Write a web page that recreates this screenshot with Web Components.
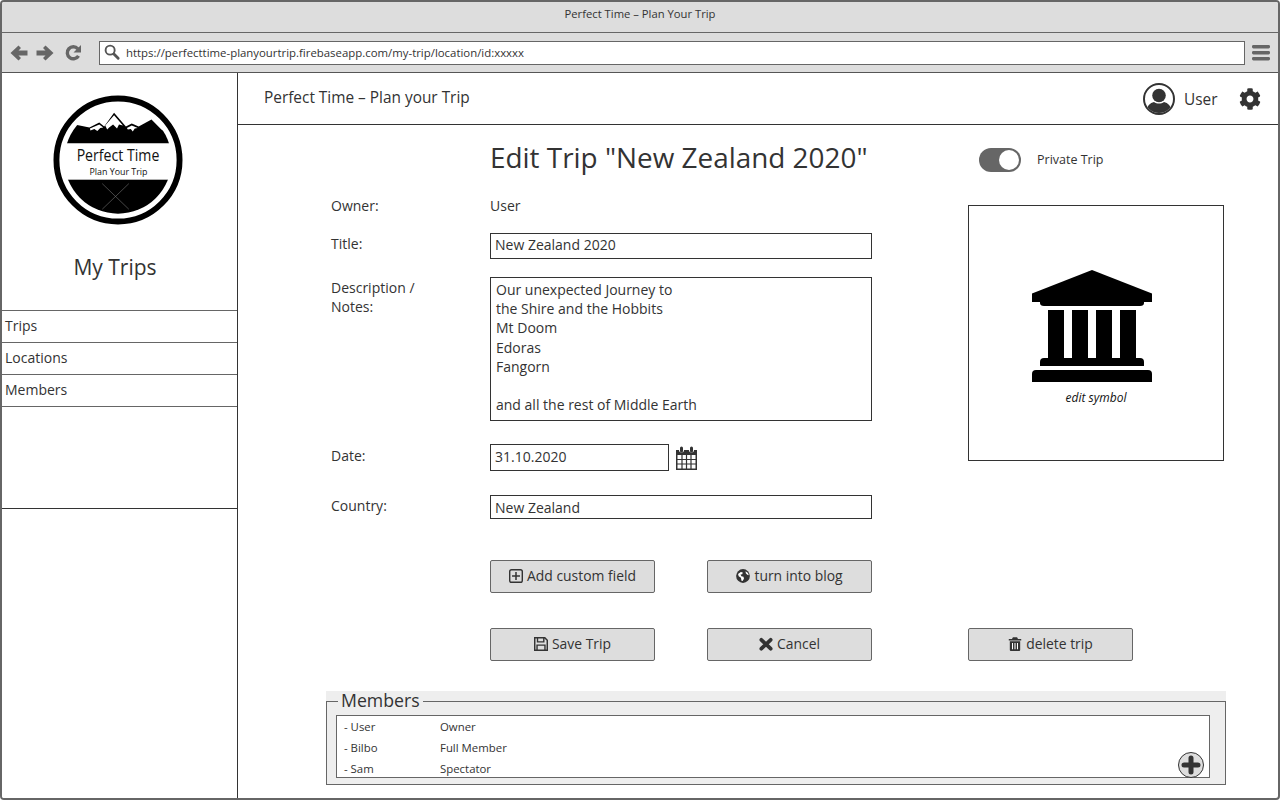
<!DOCTYPE html>
<html>
<head>
<meta charset="utf-8">
<title>Perfect Time</title>
<style>
  html, body { margin: 0; padding: 0; background: #fff; }
  body { font-family: "Open Sans", sans-serif; color: #333; }
</style>
</head>
<body>
<browser-window>
  <side-nav></side-nav>
  <top-bar></top-bar>
  <trip-form></trip-form>
</browser-window>

<script>
const ICONS = {
  back: '<path fill="#666" d="M.5 9 8.500 1.500 11 4 8.500 6.500H17.500V11.500H8.500L11 14 8.500 16.500z"/>',
  forward: '<path fill="#666" d="M17.500 9 9.500 1.500 7 4 9.500 6.500H.5V11.500H9.500L7 14 9.500 16.500z"/>',
  reload: '<path fill="none" stroke="#666" stroke-width="3.400" d="M13.500 11.800A6 6 0 1 1 12.800 4.800"/><path fill="#666" d="M16 1v7.500H8.500z"/>',
  search: '<circle cx="6.5" cy="6.5" r="4.8" fill="none" stroke="#555" stroke-width="2"/><path stroke="#555" stroke-width="3" stroke-linecap="round" d="M10.5 10.5 15 15"/>',
  bars: '<rect x="0" y="1" width="18" height="3.4" rx="1.4" fill="#666"/><rect x="0" y="7" width="18" height="3.4" rx="1.4" fill="#666"/><rect x="0" y="13" width="18" height="3.4" rx="1.4" fill="#666"/>',
  user: '<defs><clipPath id="c"><circle cx="16" cy="16" r="14"/></clipPath></defs><circle cx="16" cy="16" r="15" fill="#fff" stroke="#333" stroke-width="2"/><g clip-path="url(#c)" fill="#333"><circle cx="16" cy="12.5" r="6.8"/><path d="M3 32c0-9 4-12 8-13 3 2 7 2 10 0 4 1 8 4 8 13z"/></g>',
  gear: '<path fill="#333" transform="scale(.03125)" d="M487.4 315.7l-42.6-24.6c4.3-23.2 4.3-47 0-70.2l42.6-24.6c4.9-2.8 7.1-8.6 5.5-14-11.1-35.6-30-67.8-54.7-94.6-3.8-4.1-10-5.1-14.8-2.3L380.8 110c-17.9-15.4-38.5-27.3-60.8-35.1V25.8c0-5.6-3.9-10.5-9.4-11.7-36.7-8.2-74.3-7.8-109.2 0-5.5 1.2-9.4 6.1-9.4 11.7V75c-22.2 7.9-42.8 19.8-60.8 35.1L88.7 85.5c-4.9-2.8-11-1.9-14.8 2.3-24.7 26.7-43.6 58.9-54.7 94.6-1.7 5.4.6 11.2 5.5 14L67.3 221c-4.3 23.2-4.3 47 0 70.2l-42.6 24.6c-4.9 2.8-7.1 8.6-5.5 14 11.1 35.6 30 67.8 54.7 94.6 3.8 4.1 10 5.1 14.8 2.3l42.6-24.6c17.9 15.4 38.5 27.3 60.8 35.1v49.2c0 5.6 3.9 10.5 9.4 11.7 36.7 8.2 74.3 7.8 109.2 0 5.5-1.2 9.4-6.1 9.4-11.7v-49.2c22.2-7.9 42.8-19.8 60.8-35.1l42.6 24.6c4.9 2.8 11 1.9 14.8-2.3 24.7-26.7 43.6-58.9 54.7-94.6 1.5-5.5-.7-11.3-5.6-14.1zM256 336c-44.1 0-80-35.9-80-80s35.9-80 80-80 80 35.9 80 80-35.9 80-80 80z"/>',
  plusbox: '<rect x="1.6" y="1.6" width="10.8" height="10.8" rx="1.6" fill="none" stroke="#333" stroke-width="1.2"/><path stroke="#333" stroke-width="1.3" d="M7 3.6v6.8M3.6 7h6.8"/>',
  globe: '<circle cx="7" cy="7" r="6.4" fill="#333"/><path fill="#fff" d="M2.4 5.2 5 3.4l1.8.3-.5 1.6-1.6.4.8 1.6 2 .5.4 1.7-1.3 2.2-1-.4-.5-2.6L3 7.2zM9.4 2.6l2.2 1.6.8 2-1.4-.4-1.4-1.4z"/>',
  save: '<path fill="none" stroke="#333" stroke-width="1.3" d="M1.6 1.6h8.6l2.2 2.2v8.6H1.6z"/><path fill="none" stroke="#333" stroke-width="1.2" d="M4 1.8v3.4h5.4V1.8M3.6 12.2V8h6.8v4.2"/>',
  times: '<path stroke="#333" stroke-width="3.2" stroke-linecap="round" d="M3 3.4l8 7.6M11 3.4 3 11"/>',
  trash: '<path fill="#333" d="M5 .8h4l.9 1.7H13v1.4H1V2.5h3.1zM2 4.7h10V13a1 1 0 0 1-1 1H3a1 1 0 0 1-1-1z"/><path stroke="#fff" stroke-width="1" d="M4.6 6.2v6M7 6.2v6M9.4 6.2v6"/>'
};
const ICON_VIEW = {
  back: '0 0 18 18', forward: '0 0 18 18', reload: '0 0 18 18', search: '0 0 18 18', bars: '0 0 18 18',
  user: '0 0 32 32', gear: '0 0 16 16',
  plusbox: '1 1 12 12', globe: '0.5 0.5 13 13', save: '1 1 12 12', times: '1 1 12 12', trash: '0.5 0.5 13 13.500'
};

class UiIcon extends HTMLElement {
  connectedCallback() {
    const name = this.getAttribute('name');
    const size = this.getAttribute('size') || 14;
    this.attachShadow({ mode: 'open' });
    this.shadowRoot.innerHTML = `
      <style>
        :host { display: inline-flex; flex: none; }
        svg { display: block; }
      </style>
      <svg width="${size}" height="${size}" viewBox="${ICON_VIEW[name]}">${ICONS[name]}</svg>`;
  }
}

class BrowserWindow extends HTMLElement {
  connectedCallback() {
    this.attachShadow({ mode: 'open' });
    this.shadowRoot.innerHTML = `
      <style>
        :host {
          display: block;
          box-sizing: border-box;
          width: 1280px;
          height: 800px;
          border: 2px solid #666;
          border-radius: 4px;
          overflow: hidden;
          background: #fff;
        }
        .title {
          height: 23px;
          padding-bottom: 7px;
          background: #ddd;
          border-bottom: 1px solid #666;
          display: flex;
          align-items: center;
          justify-content: center;
          font-size: 11.25px;
          color: #333;
        }
        .tools {
          height: 39px;
          background: #ddd;
          border-bottom: 1px solid #555;
          display: flex;
          align-items: center;
          padding: 0 8px;
        }
        .nav { display: flex; align-items: center; gap: 8px; width: 89px; flex: none; }
        .url {
          flex: 1;
          height: 22px;
          background: #fff;
          border: 1px solid #666;
          display: flex;
          align-items: center;
          gap: 5px;
          padding-left: 4px;
          font-size: 11.4px;
          color: #333;
        }
        .bars { margin-left: 7px; }
        .body { display: grid; grid-template-columns: 235px 1fr; height: 725px; }
        .right { display: flex; flex-direction: column; border-left: 1px solid #333; min-width: 0; }
      </style>
      <div class="title">Perfect Time – Plan Your Trip</div>
      <div class="tools">
        <div class="nav">
          <ui-icon name="back" size="18"></ui-icon>
          <ui-icon name="forward" size="18"></ui-icon>
          <ui-icon name="reload" size="18" style="margin-left:3px"></ui-icon>
        </div>
        <div class="url"><ui-icon name="search" size="17"></ui-icon><span>https://perfecttime-planyourtrip.firebaseapp.com/my-trip/location/id:xxxxx</span></div>
        <ui-icon class="bars" name="bars" size="18"></ui-icon>
      </div>
      <div class="body">
        <slot name="side"></slot>
        <div class="right"><slot></slot></div>
      </div>`;
    const side = this.querySelector('side-nav');
    if (side) side.slot = 'side';
  }
}

class TripLogo extends HTMLElement {
  connectedCallback() {
    this.attachShadow({ mode: 'open' });
    this.shadowRoot.innerHTML = `
      <style>
        :host { display: block; width: 130px; height: 130px; }
        svg { display: block; }
        text { font-family: "Open Sans", sans-serif; fill: #111; }
      </style>
      <svg width="130" height="130" viewBox="0 0 132 132">
        <defs><clipPath id="inner"><circle cx="66" cy="66" r="54.5"/></clipPath></defs>
        <circle cx="66" cy="66" r="62.5" fill="#fff" stroke="#000" stroke-width="6"/>
        <g clip-path="url(#inner)">
          <path fill="#000" d="M0 49 22 30 37 33 47 28 52 32 62 18 74 32 80 29 87 32 100 25 110 35 132 49z"/>
          <path fill="#fff" d="M62 20.500 71 31 67 30 65 34 61 30 57 33 55 35 53 31z"/>
          <path fill="#fff" d="M47 30 51 33 48 33.500 45 36.500 42 34.500 38 36 37.500 34z"/>
          <path fill="#fff" d="M80 31 86 33.500 83 34 81 37 79 34.500 76 35 75 33.500z"/>
          <rect x="0" y="86" width="132" height="40" fill="#000"/>
          <path stroke="#777" stroke-width=".6" d="M50 90l27 26M77 90l-27 26"/>
        </g>
        <text x="24" y="67" font-size="17" textLength="84" lengthAdjust="spacingAndGlyphs">Perfect Time</text>
        <text x="37" y="81" font-size="10" textLength="59" lengthAdjust="spacingAndGlyphs">Plan Your Trip</text>
      </svg>`;
  }
}

class SideNav extends HTMLElement {
  connectedCallback() {
    this.attachShadow({ mode: 'open' });
    this.shadowRoot.innerHTML = `
      <style>
        :host { display: flex; flex-direction: column; height: 100%; background: #fff; }
        trip-logo { margin: 22px 0 0 51px; }
        h2 {
          margin: 25px 0 0;
          font-weight: 400;
          font-size: 21px;
          line-height: 34px;
          height: 60px;
          text-align: center;
          padding-right: 9px;
          color: #333;
        }
        a {
          display: block;
          height: 31px;
          line-height: 29px;
          border-top: 1px solid #666;
          padding-left: 3px;
          font-size: 14px;
          color: #333;
        }
        .spacer { height: 101px; border-top: 1px solid #666; }
        .end { border-top: 1px solid #333; }
      </style>
      <trip-logo></trip-logo>
      <h2>My Trips</h2>
      <a>Trips</a>
      <a>Locations</a>
      <a>Members</a>
      <div class="spacer"></div>
      <div class="end"></div>`;
  }
}

class TopBar extends HTMLElement {
  connectedCallback() {
    this.attachShadow({ mode: 'open' });
    this.shadowRoot.innerHTML = `
      <style>
        :host {
          display: flex;
          align-items: center;
          flex: none;
          height: 51px;
          border-bottom: 1px solid #333;
          padding: 0 17px 0 26px;
          font-size: 15.4px;
          color: #333;
        }
        .name { flex: 1; padding-bottom: 3px; }
        .user { margin: 0 7px 0 9px; width: 48px; }
        .who { display: flex; align-items: center; margin-top: 1px; }
      </style>
      <div class="name">Perfect Time – Plan your Trip</div>
      <div class="who">
        <ui-icon name="user" size="32"></ui-icon>
        <span class="user">User</span>
        <ui-icon name="gear" size="22"></ui-icon>
      </div>`;
  }
}

class FormRow extends HTMLElement {
  connectedCallback() {
    this.attachShadow({ mode: 'open' });
    this.shadowRoot.innerHTML = `
      <style>
        :host { display: grid; grid-template-columns: 159px 382px; font-size: 14px; color: #333; }
        .label { line-height: 19px; padding-top: 1px; }
        :host(.owner) .label { padding-top: 0; }
      </style>
      <div class="label"><slot name="label"></slot></div>
      <div><slot></slot></div>`;
  }
}

class TextBox extends HTMLElement {
  connectedCallback() {
    this.attachShadow({ mode: 'open' });
    this.shadowRoot.innerHTML = `
      <style>
        :host {
          display: flex;
          align-items: center;
          box-sizing: border-box;
          border: 1px solid #333;
          padding: 0 4px 2px;
          font-size: 14px;
          line-height: 19.2px;
          color: #333;
          background: #fff;
        }
      </style>
      <slot></slot>`;
  }
}

class ActionButton extends HTMLElement {
  connectedCallback() {
    this.attachShadow({ mode: 'open' });
    this.shadowRoot.innerHTML = `
      <style>
        :host {
          display: flex;
          align-items: center;
          justify-content: center;
          gap: 4px;
          box-sizing: border-box;
          width: 165px;
          height: 33px;
          background: #ddd;
          border: 1px solid #666;
          border-radius: 2px;
          font-size: 13.9px;
          color: #333;
          padding-bottom: 2px;
        }
        ::slotted(ui-icon) { margin-top: 1px; }
      </style>
      <slot></slot>`;
  }
}

class ToggleSwitch extends HTMLElement {
  connectedCallback() {
    this.attachShadow({ mode: 'open' });
    this.shadowRoot.innerHTML = `
      <style>
        :host { display: flex; align-items: center; gap: 16px; font-size: 12.5px; color: #333; }
        .track {
          box-sizing: border-box;
          width: 42px;
          height: 24px;
          border-radius: 12px;
          background: #666;
          display: flex;
          justify-content: flex-end;
          padding: 2px 2px 2px 0;
        }
        .knob { width: 20px; height: 20px; border-radius: 50%; background: #fff; }
        .text { padding-bottom: 2px; }
      </style>
      <div class="track"><div class="knob"></div></div>
      <div class="text"><slot></slot></div>`;
  }
}

class SymbolBox extends HTMLElement {
  connectedCallback() {
    this.attachShadow({ mode: 'open' });
    this.shadowRoot.innerHTML = `
      <style>
        :host {
          display: flex;
          flex-direction: column;
          align-items: center;
          box-sizing: border-box;
          width: 256px;
          height: 256px;
          border: 1px solid #333;
          padding-top: 64px;
        }
        svg { display: block; margin-left: -8px; }
        i { font-size: 12px; line-height: 16px; margin-top: 8px; color: #111; }
      </style>
      <svg width="120" height="112" viewBox="0 0 120 112" fill="#000">
        <path d="M60 0 120 23.5V32H0V23.5z"/>
        <path d="M8 32H112V33Q112 36 108 36H12Q8 36 8 33z"/>
        <rect x="16" y="40" width="16" height="48"/>
        <rect x="40" y="40" width="16" height="48"/>
        <rect x="64" y="40" width="16" height="48"/>
        <rect x="88" y="40" width="16" height="48"/>
        <path d="M8 96V92Q8 88 12 88H108Q112 88 112 92V96z"/>
        <path d="M0 112V104Q0 100 4 100H116Q120 100 120 104V112z"/>
      </svg>
      <i>edit symbol</i>`;
  }
}

class CalendarIcon extends HTMLElement {
  connectedCallback() {
    this.attachShadow({ mode: 'open' });
    this.shadowRoot.innerHTML = `
      <style>
        :host { display: block; flex: none; }
        svg { display: block; }
      </style>
      <svg width="23" height="24" viewBox="0 0 23 24">
        <path fill="#333" d="M1 4h3a2.500 2.500 0 0 0 5 0h5a2.500 2.500 0 0 0 5 0h3v20H1z"/>
        <rect x="5" y="0.500" width="3" height="6" rx="1.500" fill="#333"/>
        <rect x="15" y="0.500" width="3" height="6" rx="1.500" fill="#333"/>
        <rect x="2.500" y="9" width="18" height="13.500" fill="#fff"/>
        <path stroke="#333" stroke-width="1.200" d="M7 9v14M11.500 9v14M16 9v14M2 13.500h19M2 18h19"/>
      </svg>`;
  }
}

class MemberList extends HTMLElement {
  connectedCallback() {
    this.attachShadow({ mode: 'open' });
    this.shadowRoot.innerHTML = `
      <style>
        :host { display: block; width: 900px; background: #eee; color: #333; }
        fieldset {
          margin: 0;
          padding: 4px 15px 6px 9px;
          border: 1px solid #666;
          height: 94px;
          box-sizing: border-box;
          min-width: 0;
        }
        legend {
          margin-left: 2px;
          padding: 0 3px 2px;
          font-size: 17.7px;
          line-height: 18px;
          color: #333;
        }
        .list {
          position: relative;
          height: 63px;
          box-sizing: border-box;
          background: #fff;
          border: 1px solid #666;
          padding: 0 7px;
        }
        .row {
          display: grid;
          grid-template-columns: 96px 1fr;
          height: 21px;
          line-height: 21px;
          font-size: 11.4px;
        }
        .add {
          position: absolute;
          right: 5px;
          bottom: -1px;
          width: 26px;
          height: 26px;
          box-sizing: border-box;
          border-radius: 50%;
          background: #ddd;
          border: 1px solid #333;
          display: flex;
          align-items: center;
          justify-content: center;
        }
      </style>
      <fieldset>
        <legend>Members</legend>
        <div class="list">
          <div class="row"><span>- User</span><span>Owner</span></div>
          <div class="row"><span>- Bilbo</span><span>Full Member</span></div>
          <div class="row"><span>- Sam</span><span>Spectator</span></div>
          <div class="add">
            <svg width="20" height="20" viewBox="0 0 20 20"><path stroke="#333" stroke-width="5" stroke-linecap="round" d="M10 3v14M3 10h14"/></svg>
          </div>
        </div>
      </fieldset>`;
  }
}

class TripForm extends HTMLElement {
  connectedCallback() {
    this.attachShadow({ mode: 'open' });
    this.shadowRoot.innerHTML = `
      <style>
        :host { display: block; padding-left: 88px; font-size: 14px; color: #333; }
        .cols { display: grid; grid-template-columns: 541px 256px; gap: 96px; padding-left: 5px; }
        h1 {
          margin: 0 0 0 159px;
          padding-top: 12px;
          height: 59px;
          font-weight: 400;
          font-size: 27.9px;
          line-height: 40px;
          white-space: nowrap;
          color: #333;
        }
        .owner { height: 37px; }
        .title-row { height: 44px; }
        .title-row text-box { height: 26px; }
        .desc-row { height: 167px; }
        .desc-row text-box { height: 144px; display: block; padding: 2px 5px; }
        .date-row { height: 51px; }
        .date-line { display: flex; gap: 6px; align-items: center; }
        .date-line text-box { width: 179px; height: 27px; }
        .country-row { height: 65px; }
        .country-row text-box { height: 24px; padding: 2px 4px 0; }
        .buttons { display: flex; gap: 52px; margin-left: 159px; }
        .buttons + .buttons { margin-top: 35px; }
        toggle-switch { margin: 23px 0 0 11px; }
        symbol-box { margin-top: 33px; }
        .del { margin-top: 167px; }
        member-list { margin-top: 30px; }
      </style>
      <div class="cols">
        <div>
          <h1>Edit Trip "New Zealand 2020"</h1>
          <form-row class="owner"><span slot="label">Owner:</span><div style="line-height:20px">User</div></form-row>
          <form-row class="title-row"><span slot="label">Title:</span><text-box>New Zealand 2020</text-box></form-row>
          <form-row class="desc-row"><span slot="label">Description /<br>Notes:</span>
            <text-box>Our unexpected Journey to<br>the Shire and the Hobbits<br>Mt Doom<br>Edoras<br>Fangorn<br><br>and all the rest of Middle Earth</text-box>
          </form-row>
          <form-row class="date-row"><span slot="label" style="display:block;margin-top:1px">Date:</span>
            <div class="date-line"><text-box>31.10.2020</text-box><calendar-icon></calendar-icon></div>
          </form-row>
          <form-row class="country-row"><span slot="label">Country:</span><text-box>New Zealand</text-box></form-row>
          <div class="buttons">
            <action-button><ui-icon name="plusbox"></ui-icon>Add custom field</action-button>
            <action-button><ui-icon name="globe"></ui-icon>turn into blog</action-button>
          </div>
          <div class="buttons">
            <action-button><ui-icon name="save"></ui-icon>Save Trip</action-button>
            <action-button><ui-icon name="times"></ui-icon>Cancel</action-button>
          </div>
        </div>
        <div>
          <toggle-switch>Private Trip</toggle-switch>
          <symbol-box></symbol-box>
          <action-button class="del"><ui-icon name="trash"></ui-icon>delete trip</action-button>
        </div>
      </div>
      <member-list></member-list>`;
  }
}

customElements.define('ui-icon', UiIcon);
customElements.define('trip-logo', TripLogo);
customElements.define('side-nav', SideNav);
customElements.define('top-bar', TopBar);
customElements.define('form-row', FormRow);
customElements.define('text-box', TextBox);
customElements.define('action-button', ActionButton);
customElements.define('toggle-switch', ToggleSwitch);
customElements.define('symbol-box', SymbolBox);
customElements.define('calendar-icon', CalendarIcon);
customElements.define('member-list', MemberList);
customElements.define('trip-form', TripForm);
customElements.define('browser-window', BrowserWindow);
</script>
</body>
</html>
